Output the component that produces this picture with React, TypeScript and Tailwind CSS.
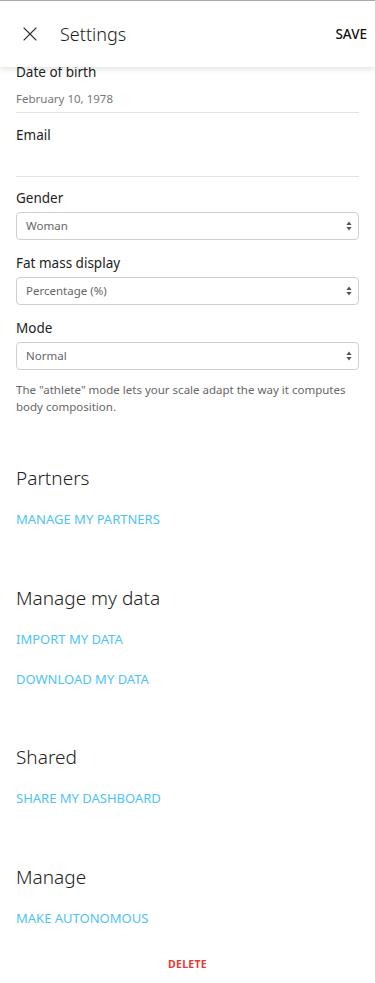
import { X } from 'lucide-react'

const selects = [
  { label: 'Gender', value: 'Woman' },
  { label: 'Fat mass display', value: 'Percentage (%)' },
  { label: 'Mode', value: 'Normal' },
]

const sections = [
  { title: 'Partners', links: ['MANAGE MY PARTNERS'] },
  { title: 'Manage my data', links: ['IMPORT MY DATA', 'DOWNLOAD MY DATA'] },
  { title: 'Shared', links: ['SHARE MY DASHBOARD'] },
  { title: 'Manage', links: ['MAKE AUTONOMOUS'] },
]

function SelectBox({ value }: { value: string }) {
  return (
    <div className="flex h-[28px] items-center justify-between rounded-[4px] border border-[#cfcfcf] bg-white pl-[9px] pr-[6px]">
      <span className="text-[11.5px] text-[#666]">{value}</span>
      <svg width="6" height="10" viewBox="0 0 6 10" className="text-[#555]">
        <path d="M3 0.5 L5.6 4 H0.4 Z" fill="currentColor" />
        <path d="M3 9.5 L5.6 6 H0.4 Z" fill="currentColor" />
      </svg>
    </div>
  )
}

export default function App() {
  return (
    <div className="min-h-[983px] w-[375px] bg-white font-['Noto_Sans',sans-serif] text-[#222]">
      <header className="relative z-10 flex h-[67px] items-center border-t border-[#aaa] bg-white pl-[18px] pr-[8px] shadow-[0_2px_6px_rgba(0,0,0,0.12)]">
        <X className="h-[24px] w-[24px] text-[#333]" strokeWidth={1.1} />
        <h1 className="ml-[18px] flex-1 text-[18px] font-light text-[#222]">Settings</h1>
        <button className="text-[13.5px] font-medium text-[#111]">SAVE</button>
      </header>

      <main className="-mt-[5px] px-4">
        <div className="border-b border-[#e3e3e3] pb-[3px]">
          <p className="text-[13.5px] leading-[20px]">Date of birth</p>
          <p className="mt-[7px] text-[11.5px] leading-[20px] text-[#777]">February 10, 1978</p>
        </div>
        <div className="h-[64px] border-b border-[#e3e3e3] pt-[12px]">
          <p className="text-[13.5px] leading-[20px]">Email</p>
        </div>

        <div className="mt-[12px] flex flex-col gap-[14px]">
          {selects.map((s) => (
            <div key={s.label}>
              <p className="mb-[5px] text-[13.5px] leading-[18px]">{s.label}</p>
              <SelectBox value={s.value} />
            </div>
          ))}
        </div>

        <p className="mt-[11px] text-[11.5px] leading-[17px] text-[#666]">
          The "athlete" mode lets your scale adapt the way it computes body composition.
        </p>

        <div className="mt-[49px] flex flex-col gap-[55.5px]">
          {sections.map((sec) => (
            <section key={sec.title}>
              <h2 className="text-[19px] font-light leading-[28px] text-[#222]">{sec.title}</h2>
              <div className="mt-[18px] flex flex-col gap-[22px]">
                {sec.links.map((l) => (
                  <a key={l} className="text-[13px] leading-[18px] text-[#4fc3f7]">
                    {l}
                  </a>
                ))}
              </div>
            </section>
          ))}
        </div>

        <div className="mt-[23px] pb-[12px] text-center">
          <button className="text-[10.5px] font-bold tracking-[0.3px] text-[#e53935]">DELETE</button>
        </div>
      </main>
    </div>
  )
}
